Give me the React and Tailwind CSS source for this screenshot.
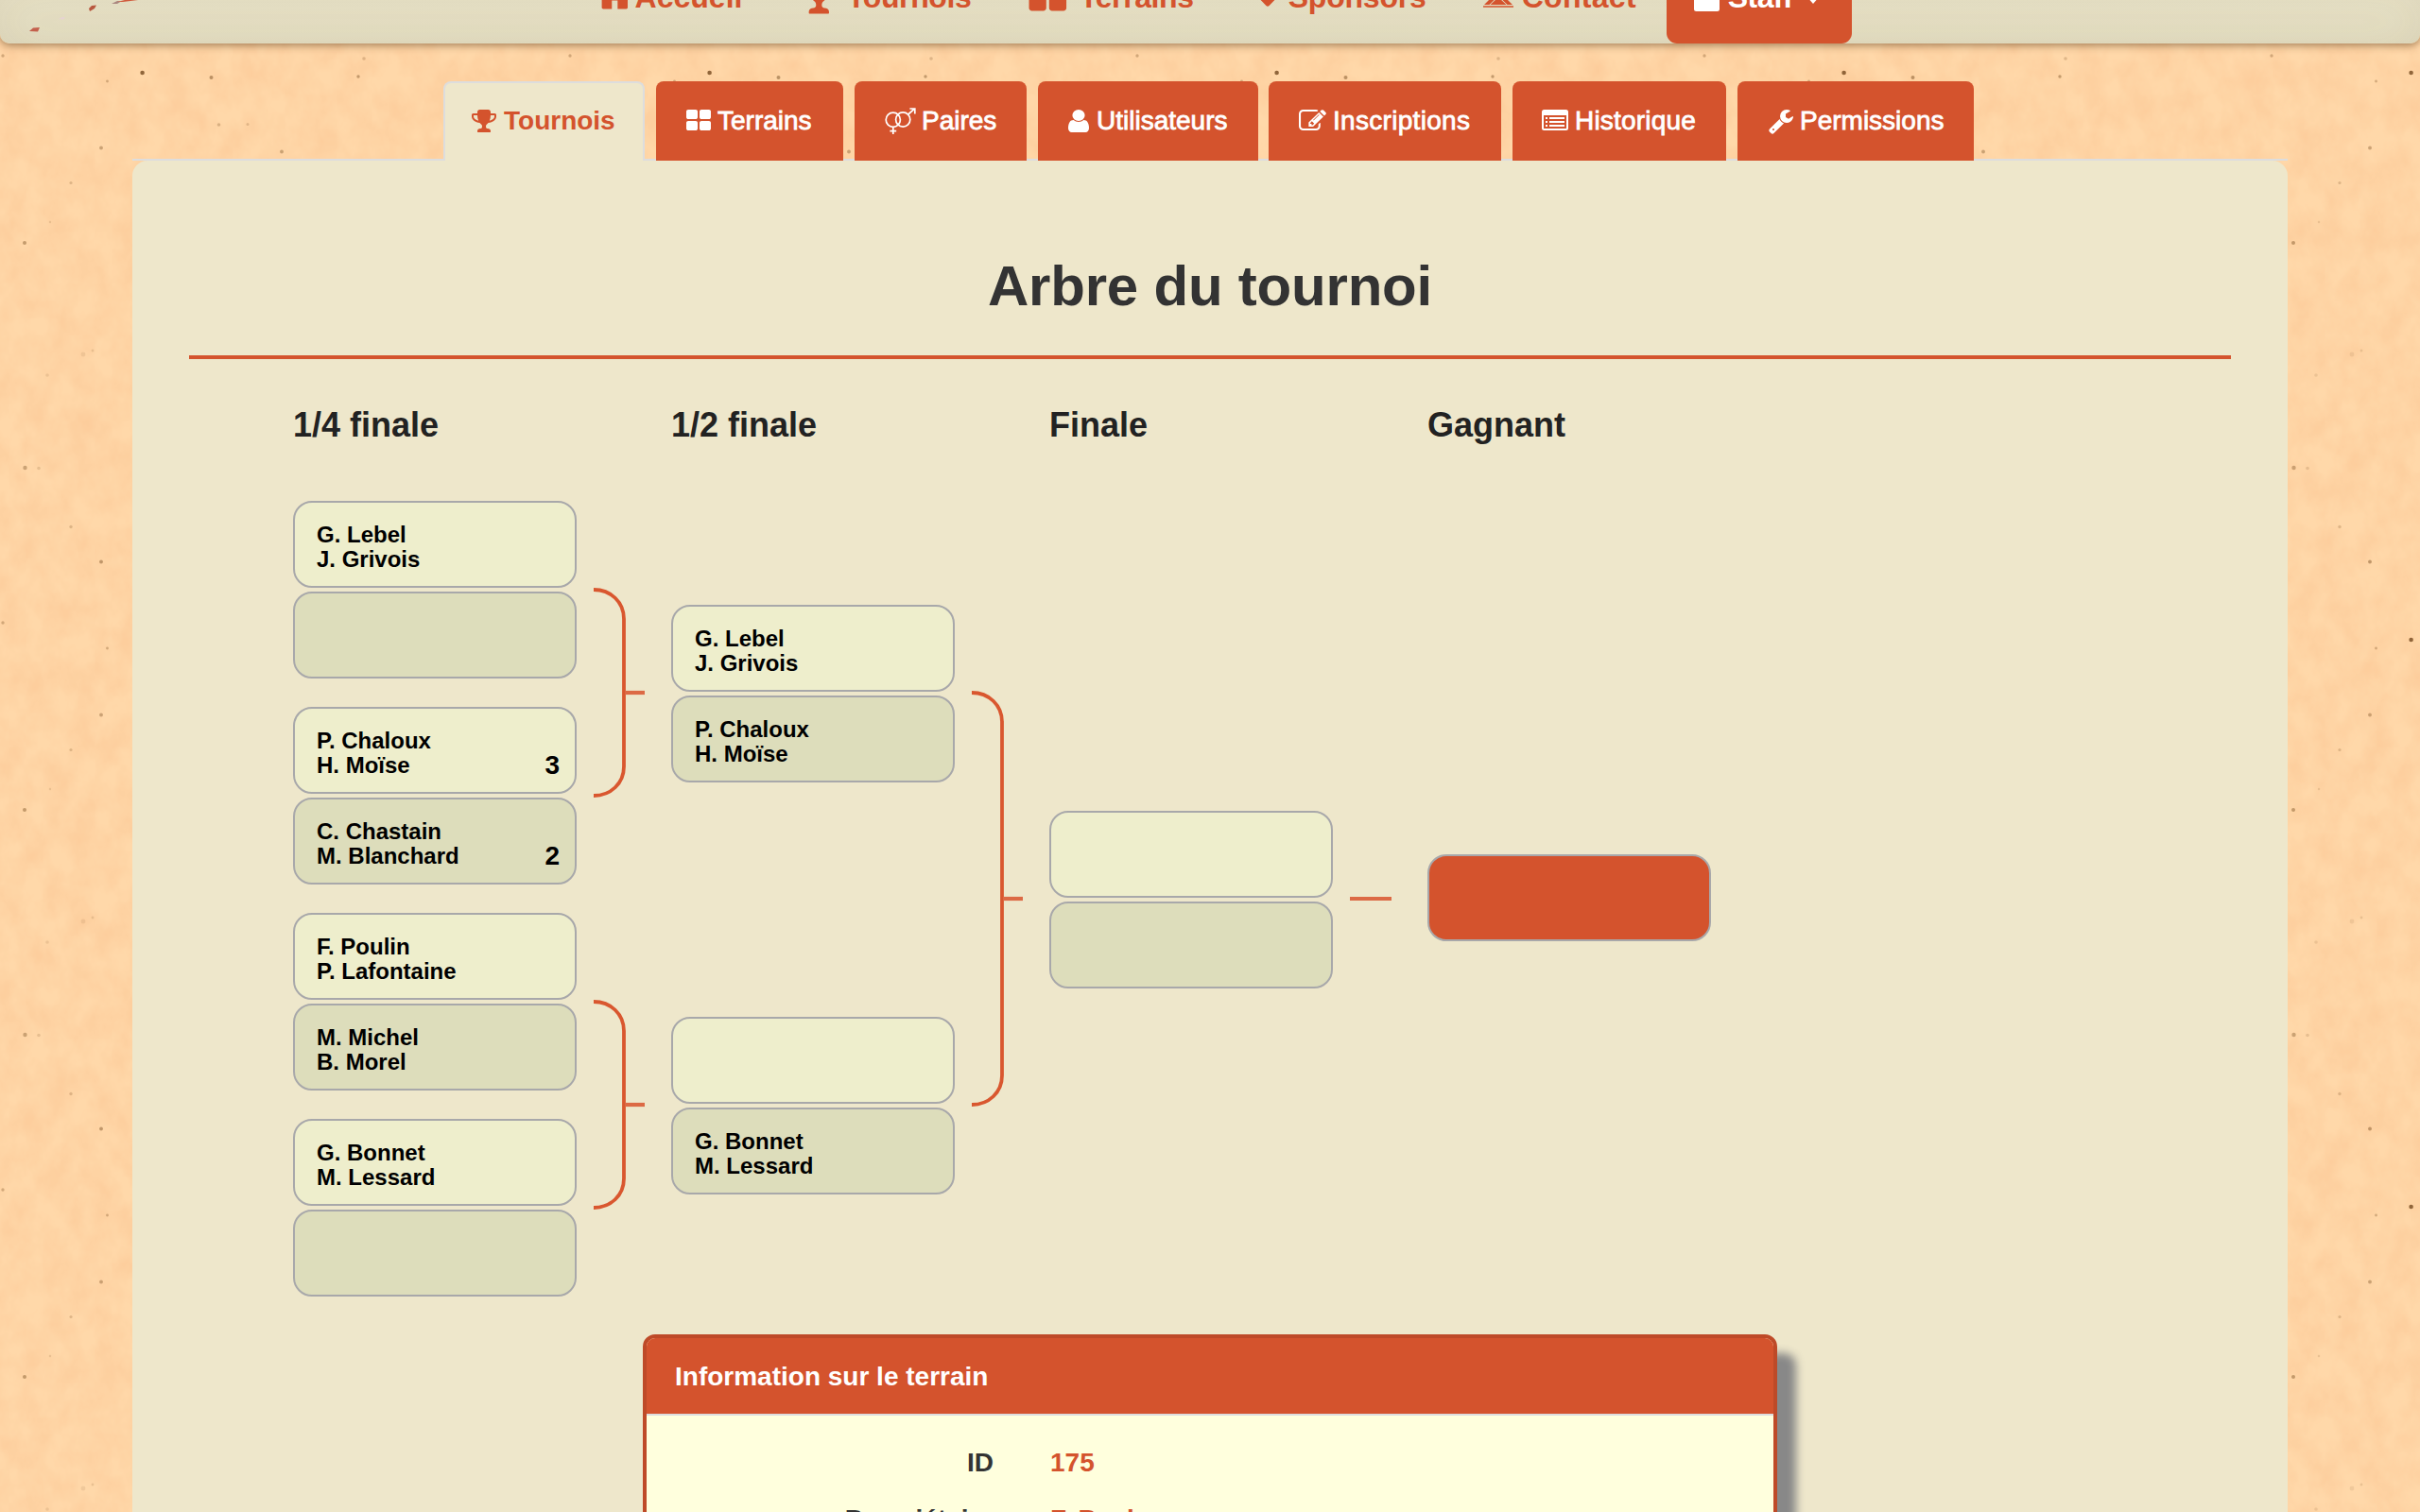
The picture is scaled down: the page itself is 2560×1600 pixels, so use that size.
import React from "react";

const TROPHY =
  "M522 883q-74-162-74-371h-256v96q0 78 94.5 162t235.5 113zm1078-275v-96h-256q0 209-74 371 141-29 235.5-113t94.5-162zm128-128v128q0 71-41.5 143t-112 130-173 97.5-215.5 44.5q-42 54-95 95-38 34-52.5 72.5t-14.5 89.5q0 54 30.5 91t97.5 37q75 0 133.5 45.5t58.5 114.5v64q0 14-9 23t-23 9h-832q-14 0-23-9t-9-23v-64q0-69 58.5-114.5t133.5-45.5q67 0 97.5-37t30.5-91q0-51-14.5-89.5t-52.5-72.5q-53-41-95-95-113-5-215.5-44.5t-173-97.5-112-130-41.5-143v-128q0-40 28-68t68-28h288v-96q0-66 47-113t113-47h576q66 0 113 47t47 113v96h288q40 0 68 28t28 68z";
const GRID =
  "M832 1024v384q0 52-38 90t-90 38h-512q-52 0-90-38t-38-90v-384q0-52 38-90t90-38h512q52 0 90 38t38 90zm0-768v384q0 52-38 90t-90 38h-512q-52 0-90-38t-38-90v-384q0-52 38-90t90-38h512q52 0 90 38t38 90zm896 768v384q0 52-38 90t-90 38h-512q-52 0-90-38t-38-90v-384q0-52 38-90t90-38h512q52 0 90 38t38 90zm0-768v384q0 52-38 90t-90 38h-512q-52 0-90-38t-38-90v-384q0-52 38-90t90-38h512q52 0 90 38t38 90z";
const USER =
  "M1536 1399q0 109-62.5 187t-150.5 78h-854q-88 0-150.5-78t-62.5-187q0-85 8.5-160.5t31.5-152 58.5-131 94-89 134.5-34.5q131 128 313 128t313-128q76 0 134.5 34.5t94 89 58.5 131 31.5 152 8.5 160.5zm-256-887q0 159-112.5 271.5t-271.5 112.5-271.5-112.5-112.5-271.5 112.5-271.5 271.5-112.5 271.5 112.5 112.5 271.5z";
const PENCIL =
  "M888 1184l116-116-152-152-116 116v56h96v96h56zm440-720q-16-16-33 1l-350 350q-17 17-1 33t33-1l350-350q17-17 1-33zm80 594v190q0 119-84.5 203.5t-203.5 84.5h-832q-119 0-203.5-84.5t-84.5-203.5v-832q0-119 84.5-203.5t203.5-84.5h832q63 0 117 25 15 7 18 23 3 17-9 29l-49 49q-14 14-32 8-23-6-45-6h-832q-66 0-113 47t-47 113v832q0 66 47 113t113 47h832q66 0 113-47t47-113v-126q0-13 9-22l64-64q15-15 35-7t20 29zm-96-738l288 288-672 672h-288v-288zm444 132l-92 92-288-288 92-92q28-28 68-28t68 28l152 152q28 28 28 68t-28 68z";
const WRENCH =
  "M448 1472q0-26-19-45t-45-19-45 19-19 45 19 45 45 19 45-19 19-45zm644-420l-682 682q-37 37-90 37-52 0-91-37l-106-108q-38-36-38-90 0-53 38-91l681-681q39 98 114.5 173.5t173.5 114.5zm634-435q0 39-23 106-47 134-164.5 217.5t-258.5 83.5q-185 0-316.5-131.5t-131.5-316.5 131.5-316.5 316.5-131.5q58 0 121.5 16.5t107.5 46.5q16 11 16 28t-16 28l-293 169v224l193 107q5-3 79-48.5t135.5-81 70.5-35.5q15 0 23.5 10t8.5 25z";
const HOME =
  "M1472 992v480q0 26-19 45t-45 19h-384v-384h-256v384h-384q-26 0-45-19t-19-45v-480q0-1 .5-3t.5-3l575-474 575 474q1 2 1 6zm223-69l-62 74q-8 9-21 11h-3q-13 0-21-7l-692-577-692 577q-12 8-24 7-13-2-21-11l-62-74q-8-10-7-23.5t11-21.5l719-599q32-26 76-26t76 26l244 204v-195q0-14 9-23t23-9h192q14 0 23 9t9 23v408l219 182q10 8 11 21.5t-7 23.5z";

function Glyph({ d, box = "0 0 1792 1792", className }) {
  return (
    <svg viewBox={box} preserveAspectRatio="none" fill="currentColor" className={className} aria-hidden="true">
      <path d={d} />
    </svg>
  );
}

function VenusMars() {
  return (
    <svg viewBox="0 0 34 28" className="h-[28px] w-[34px] shrink-0" fill="none" stroke="currentColor" strokeWidth="1.7" aria-hidden="true">
      <circle cx="8.8" cy="12.7" r="7.6" />
      <circle cx="19.2" cy="12.5" r="7.6" />
      <path d="M8.8 20.3V28M5.4 24.6h6.800M24.800 7L31.400 1.200M26.400 1h5.400v5.600" />
    </svg>
  );
}

function ListAlt() {
  return (
    <svg viewBox="0 0 28 28" className="h-[28px] w-[28px] shrink-0" fill="currentColor" aria-hidden="true">
      <path
        fillRule="evenodd"
        d="M2.5 2h23A2.5 2.5 0 0 1 28 4.5v17a2.5 2.5 0 0 1-2.5 2.5h-23A2.5 2.5 0 0 1 0 21.5v-17A2.5 2.5 0 0 1 2.5 2zM2 8v13.4a.6.6 0 0 0 .6.6h22.8a.6.6 0 0 0 .6-.6V8z"
      />
      <path d="M4 10h2v2H4zM8 10h16v2H8zM4 14h2v2H4zM8 14h16v2H8zM4 18h2v2H4zM8 18h16v2H8z" />
    </svg>
  );
}

function Paper() {
  const specks = [
    [150.6, 77, 2.3, 0.75], [223.5, 82, 2, 0.45], [113.5, 86, 1.4, 0.3], [379, 81, 1.7, 0.4], [385, 62, 1.8, 0.22],
    [3, 59, 1.7, 0.3], [231.5, 132, 1.8, 0.25], [262, 131.5, 1.5, 0.2],
    [107, 156.5, 1.9, 0.35], [298, 160.5, 1.9, 0.35], [75, 193.5, 1.6, 0.22], [26, 257, 2, 0.4],
    [26.5, 495, 2.2, 0.35], [41, 495.5, 1.8, 0.16], [75, 557.5, 1.7, 0.22], [107, 594.5, 1.9, 0.42],
    [53, 235, 1.2, 0.15], [88, 375, 2.4, 0.1], [98, 371, 1.4, 0.15], [50, 397, 1.8, 0.12],
  ];
  return (
    <svg className="absolute inset-0 h-[1600px] w-[2560px]" aria-hidden="true">
      <defs>
        <filter id="fibre" x="0" y="0" width="100%" height="100%" colorInterpolationFilters="sRGB">
          <feTurbulence type="fractalNoise" baseFrequency="0.04 0.03" numOctaves="4" seed="7" />
          <feColorMatrix values="0 0 0 0 0.98  0 0 0 0 0.76  0 0 0 0 0.56  0.8 0 0 0 -0.22" />
        </filter>
        <filter id="soft">
          <feGaussianBlur stdDeviation="0.5" />
        </filter>
        <pattern id="specks" width="600" height="600" patternUnits="userSpaceOnUse">
          {specks.map(([x, y, r, o], i) => (
            <circle key={i} cx={x} cy={y} r={r} fill="#6b3f14" opacity={o} filter="url(#soft)" />
          ))}
        </pattern>
      </defs>
      <rect width="2560" height="1600" fill="#ffd8a9" />
      <rect width="2560" height="1600" filter="url(#fibre)" />
      <rect width="2560" height="1600" fill="url(#specks)" />
    </svg>
  );
}

function Header() {
  return (
    <header className="relative flex h-[46px] items-end rounded-b-[10px] bg-linear-to-b from-[#eae3c8] to-[#e5dec2] shadow-[0_2px_8px_rgba(70,40,10,0.5),inset_0_0_50px_rgba(90,90,50,0.09)]">
      <svg className="absolute left-0 top-0 h-[46px] w-[160px]" aria-hidden="true">
        <path d="M31 33l4-3.5 7-.5-2 4.500z" fill="#c4604c" />
        <path d="M94 9l3-3 5-.5-2 3.500-5 3z" fill="#b8573f" />
        <path d="M62 20l4-2 3 .5-2 2z" fill="#e6d3d2" />
        <path d="M118 4l6-3 4 .5-4 2.500z" fill="#a9867f" />
        <path d="M124 2l8-2h14l-16 2z" fill="#d05a3c" />
      </svg>
      <nav className="flex h-[106px] shrink-0 items-start text-[32px] leading-[36px] font-bold text-[#d4532d]">
        <a className="ml-[629px] flex h-full items-start pt-[39px]">
          <Glyph d={HOME} className="-mt-[6px] h-[42.600px] w-[42.600px]" />
          <span>Accueil</span>
        </a>
        <a className="ml-[60px] flex h-full items-start pt-[39px]">
          <Glyph d={TROPHY} className="-mt-[3.600px] h-[42.600px] w-[42.600px]" />
          <span className="pl-[8px] tracking-[-0.4px]">Tournois</span>
        </a>
        <a className="ml-[60px] flex h-full items-start pt-[39px]">
          <Glyph d={GRID} className="-mt-[3.600px] h-[42.600px] w-[42.600px]" />
          <span className="pl-[12px] tracking-[-0.4px]">Terrains</span>
        </a>
        <a className="ml-[59px] flex h-full items-start pt-[39px]">
          <svg viewBox="0 0 38 40" fill="currentColor" className="-mt-[3px] h-[40px] w-[38px]" aria-hidden="true">
            <path d="M17.400 30L2 14C-3 6 5-1 12 1c4 1 7 5 7 5s3-4 7-5c7-2 15 5 10 13L20.600 30q-1.600 1.500-3.200 0z" />
          </svg>
          <span className="pl-[3px] tracking-[-0.2px]">Sponsors</span>
        </a>
        <a className="ml-[60px] flex h-full items-start pt-[39px]">
          <svg viewBox="0 0 32 32" fill="currentColor" className="-mt-[3px] h-[32px] w-[32px]" aria-hidden="true">
            <path d="M0 31.800v-1.500h32v1.500zM1 29L10 20l3 2.500L6.500 29zM31 29L22 20l-3 2.500L25.500 29zM7.500 29l8.500-8 8.500 8z" />
          </svg>
          <span className="pl-[9px] tracking-[0.3px]">Contact</span>
        </a>
        <a className="ml-[32px] flex h-full w-[196px] items-start rounded-b-[11px] bg-[#d4532d] pt-[39px] pl-[29px] text-white">
          <svg viewBox="0 0 27 34" className="h-[34px] w-[27px]" fill="currentColor" aria-hidden="true">
            <path d="M2.500 15h22A2.500 2.500 0 0 1 27 17.500v13a2.500 2.500 0 0 1-2.500 2.500h-22A2.500 2.500 0 0 1 0 30.500v-13A2.500 2.500 0 0 1 2.500 15z" />
          </svg>
          <span className="pl-[9px] tracking-[-0.6px]">Staff</span>
          <svg viewBox="0 0 14 8" className="mt-[17px] ml-[15px] h-[8px] w-[14px]" fill="currentColor" aria-hidden="true">
            <path d="M0 0h14L7 8z" />
          </svg>
        </a>
      </nav>
    </header>
  );
}

function Tab({ size, icon, gap, children }) {
  return (
    <a className={`flex h-[84px] shrink-0 items-start rounded-t-[8px] bg-[#d4532d] pt-[28px] text-white ${size}`}>
      {icon}
      <span className={`-mt-[6px] text-[28px] leading-[40px] whitespace-nowrap [-webkit-text-stroke:0.8px_white] ${gap}`}>{children}</span>
    </a>
  );
}

function Tabs() {
  return (
    <div className="mx-[140px] mt-[40px] flex h-[84px]">
      <div className="h-full w-[329px] border-b-2 border-[#dddddd]" />
      <a className="flex h-full w-[213px] items-start rounded-t-[8px] border-2 border-b-0 border-[#dddddd] bg-[#eee7cb] pt-[26px] pl-[28px] text-[#d4532d]">
        <Glyph d={TROPHY} box="64 0 1664 1792" className="h-[28px] w-[26px] shrink-0" />
        <span className="-mt-[6px] pl-[8px] text-[28px] leading-[40px] font-bold">Tournois</span>
      </a>
      <div className="w-[12px] border-b-2 border-[#dddddd]" />
      <Tab size="w-[198px] pl-[32px]" gap="pl-[7px]" icon={<Glyph d={GRID} box="64 0 1664 1792" className="h-[28px] w-[26px] shrink-0" />}>
        Terrains
      </Tab>
      <div className="w-[12px] border-b-2 border-[#dddddd]" />
      <Tab size="w-[182px] pl-[32px]" gap="pl-[5px]" icon={<VenusMars />}>
        Paires
      </Tab>
      <div className="w-[12px] border-b-2 border-[#dddddd]" />
      <Tab size="w-[233px] pl-[32px]" gap="pl-[8px]" icon={<Glyph d={USER} box="256 0 1280 1792" className="h-[28px] w-[22px] shrink-0" />}>
        Utilisateurs
      </Tab>
      <div className="w-[11px] border-b-2 border-[#dddddd]" />
      <Tab size="w-[246px] pl-[32px]" gap="pl-[7px] tracking-[0.3px]" icon={<Glyph d={PENCIL} box="0 0 1792 1792" className="h-[28px] w-[29px] shrink-0" />}>
        Inscriptions
      </Tab>
      <div className="w-[12px] border-b-2 border-[#dddddd]" />
      <Tab size="w-[226px] pl-[31px]" gap="pl-[7px] tracking-[0.2px]" icon={<ListAlt />}>
        Historique
      </Tab>
      <div className="w-[12px] border-b-2 border-[#dddddd]" />
      <Tab size="w-[250px] pl-[33px]" gap="pl-[7px]" icon={<Glyph d={WRENCH} box="64 0 1664 1792" className="h-[28px] w-[26px] shrink-0" />}>
        Permissions
      </Tab>
      <div className="flex-1 border-b-2 border-[#dddddd]" />
    </div>
  );
}

function Team({ tone, names = [], score }) {
  return (
    <div className={`flex h-[92px] w-[300px] items-start justify-between rounded-[20px] border-2 border-[#a8a8aa] pt-[21px] pr-[16px] pl-[23px] text-black ${tone}`}>
      <div className="text-[24px] leading-[26px] font-bold">
        {names.map((n) => (
          <p key={n}>{n}</p>
        ))}
      </div>
      <span className="mt-[23px] text-[28px] leading-[32px] font-bold">{score}</span>
    </div>
  );
}

function Match({ a, b, sa, sb }) {
  return (
    <div className="flex flex-col gap-[4px]">
      <Team tone="bg-[#eeeecc]" names={a} score={sa} />
      <Team tone="bg-[#ddddbb]" names={b} score={sb} />
    </div>
  );
}

function Bracket({ top, mid, bottom }) {
  return (
    <>
      <path
        d={`M18 ${top}c18 0 32 13 32 31V${bottom - 31}c0 18-14 31-32 31`}
        fill="none"
        stroke="#d9572f"
        strokeWidth="3.800"
      />
      <path d={`M51 ${mid}H72`} stroke="#dc6a45" strokeWidth="4.200" />
    </>
  );
}

function Round({ title, pad, children }) {
  return (
    <div className="w-[300px]">
      <h2 className="h-[101px] text-[36px] leading-[42px] font-bold text-[#222222]">{title}</h2>
      <div className={`flex flex-col ${pad}`}>{children}</div>
    </div>
  );
}

function Gutter({ children }) {
  return (
    <svg viewBox="0 0 100 860" className="mt-[101px] h-[860px] w-[100px] shrink-0" aria-hidden="true">
      {children}
    </svg>
  );
}

export default function App() {
  return (
    <div className="relative h-[1600px] w-[2560px] overflow-hidden font-['Liberation_Sans',Arial,sans-serif]">
      <Paper />
      <div className="relative">
        <Header />
        <Tabs />
        <main className="mx-[140px] h-[1430px] rounded-t-[16px] bg-[#eee7cb] px-[60px]">
          <h1 className="pt-[98px] text-center text-[60px] leading-[70px] font-bold tracking-[-0.2px] text-[#333333]">Arbre du tournoi</h1>
          <hr className="mt-[38px] border-t-4 border-[#d4532d]" />
          <section className="mt-[49px] flex h-[983px] items-start pl-[110px]">
            <Round title="1/4 finale" pad="gap-[30px]">
              <Match a={["G. Lebel", "J. Grivois"]} />
              <Match a={["P. Chaloux", "H. Moïse"]} sa="3" b={["C. Chastain", "M. Blanchard"]} sb="2" />
              <Match a={["F. Poulin", "P. Lafontaine"]} b={["M. Michel", "B. Morel"]} />
              <Match a={["G. Bonnet", "M. Lessard"]} />
            </Round>
            <Gutter>
              <Bracket top={94} mid={203} bottom={312} />
              <Bracket top={530} mid={639} bottom={748} />
            </Gutter>
            <Round title="1/2 finale" pad="gap-[248px] pt-[110px]">
              <Match a={["G. Lebel", "J. Grivois"]} b={["P. Chaloux", "H. Moïse"]} />
              <Match b={["G. Bonnet", "M. Lessard"]} />
            </Round>
            <Gutter>
              <Bracket top={203} mid={421} bottom={639} />
            </Gutter>
            <Round title="Finale" pad="pt-[328px]">
              <Match />
            </Round>
            <Gutter>
              <path d="M18 421H62" stroke="#dc6a45" strokeWidth="4.200" />
            </Gutter>
            <Round title="Gagnant" pad="pt-[374px]">
              <Team tone="bg-[#d4532d]" />
            </Round>
          </section>
          <section className="mx-[480px] h-[400px] rounded-[13px] border-4 border-[#be4a28] bg-[#ffffdd] shadow-[20px_20px_10px_#888888]">
            <h3 className="h-[82px] rounded-t-[9px] border-b-2 border-[#dddddd] bg-[#d4532d] pt-[25px] pl-[30px] text-[28px] leading-[32px] font-bold text-white">
              Information sur le terrain
            </h3>
            <dl className="grid grid-cols-[367px_1fr] gap-x-[60px] pt-[20px] text-[28px] leading-[60px] font-bold">
              <dt className="text-right text-[#333333]">ID</dt>
              <dd className="text-[#d4532d]">175</dd>
              <dt className="text-right text-[#333333]">Propriétaire</dt>
              <dd className="text-[#d4532d]">F. Paul</dd>
            </dl>
          </section>
        </main>
      </div>
    </div>
  );
}
